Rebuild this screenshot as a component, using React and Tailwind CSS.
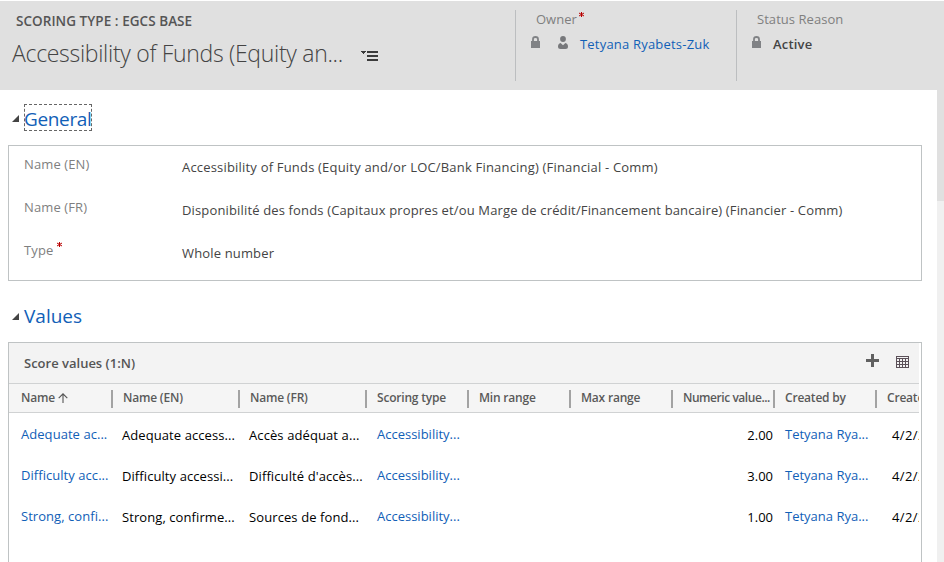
const link = "text-[#1160b7]";

function Lock() {
  return (
    <svg className="block h-[12px] w-[9px]" viewBox="0 0 9 12">
      <path d="M2 6V3.2Q2 1 4.5 1T7 3.2V6" fill="none" stroke="#808285" strokeWidth="1.8" />
      <rect y="5" width="9" height="7" fill="#808285" />
    </svg>
  );
}

function Person() {
  return (
    <svg className="block h-[13px] w-[10px]" viewBox="0 0 10 13">
      <circle cx="5" cy="3" r="2.9" fill="#77787b" />
      <path d="M0 10.5Q0 7.6 2.6 7L5 9.3 7.4 7Q10 7.6 10 10.5 10 13 7.5 13h-5Q0 13 0 10.5Z" fill="#77787b" />
    </svg>
  );
}

function Star({ className }) {
  return (
    <svg className={"block h-[5px] w-[5px] " + className} viewBox="0 0 5 5">
      <path d="M2.5 0V5M0 1L5 4M5 1L0 4" stroke="#b80000" strokeWidth="1" fill="none" />
    </svg>
  );
}

function SectionTitle({ children, focused }) {
  return (
    <div className="flex h-[27px] items-start pl-[12px]">
      <svg className="mt-[11px] block h-[7px] w-[7px]" viewBox="0 0 7 7">
        <path d="M7 0V7H0Z" fill="#444" />
      </svg>
      <div
        className={
          "ml-[5px] h-[27px] whitespace-nowrap text-[19px] " + link + " " +
          (focused ? "w-[68px] leading-[30px] outline-dashed outline-1 -outline-offset-1 outline-[#666] tracking-[-0.35px]" : "leading-[28px]")
        }
      >
        {children}
      </div>
    </div>
  );
}

function Field({ label, value, required, track }) {
  return (
    <div className="flex h-[43px] items-start whitespace-nowrap text-[13px] leading-[18px]">
      <div className="flex w-[158px] pt-[1px] text-[#7f7f7f]">
        <span className="tracking-[0.12px]">{label}</span>
        {required && <Star className="ml-[4px] mt-[1px]" />}
      </div>
      <div className={"pt-[4px] text-[#444] " + track}>{value}</div>
    </div>
  );
}

const columns = [
  ["Name", "w-[104px] pl-[12px]"],
  ["Name (EN)", "w-[127px] pl-[10px]"],
  ["Name (FR)", "w-[127px] pl-[10px]"],
  ["Scoring type", "w-[102px] pl-[10px]"],
  ["Min range", "w-[102px] pl-[10px]"],
  ["Max range", "w-[102px] pl-[10px]"],
  ["Numeric value...", "w-[102px] pl-[10px] tracking-[-0.45px]"],
  ["Created by", "w-[102px] pl-[10px]"],
  ["Created on", "w-[102px] pl-[10px]"],
];

const rows = [
  ["Adequate ac...", "Adequate access...", "Accès adéquat a...", "2.00"],
  ["Difficulty acc...", "Difficulty accessi...", "Difficulté d'accès...", "3.00"],
  ["Strong, confi...", "Strong, confirme...", "Sources de fond...", "1.00"],
];

export default function App() {
  return (
    <div className="flex h-[562px] w-[944px] flex-col overflow-hidden bg-white pt-px font-['Open_Sans','Noto_Sans',sans-serif]">
      <header className="flex h-[89px] shrink-0 bg-[#e0e0e0]">
        <div className="w-[515px] whitespace-nowrap">
          <div className="pl-[16px] pt-[11px] text-[13.5px] font-semibold leading-[18px] tracking-[0.05px] text-[#555]">
            SCORING TYPE : EGCS BASE
          </div>
          <div className="flex pl-[12px]">
            <h1 className="mt-[6px] w-[349px] text-[23px] font-light leading-[34px] tracking-[-0.3px] text-[#444]">
              Accessibility of Funds (Equity an...
            </h1>
            <svg className="mt-[21px] block h-[10px] w-[17px]" viewBox="0 0 17 10">
              <path d="M0 0h5v1H4v1H3v1H2V2H1V1H0ZM6 0h11v2H6ZM6 4h11v2H6ZM6 8h11v2H6Z" fill="#3b3b3b" />
            </svg>
          </div>
        </div>
        <div className="mt-[9px] h-[71px] w-[221px] whitespace-nowrap border-l border-[#bcbec0] pl-[15px] text-[13px]">
          <div className="flex pl-[5px] leading-[18px] text-[#7f7f7f]">
            <span>Owner</span>
            <Star className="ml-[2px] mt-[2px]" />
          </div>
          <div className="mt-[7px] flex leading-[18px]">
            <div className="mt-px w-[27px]"><Lock /></div>
            <div className="mt-px w-[22px]"><Person /></div>
            <span className={"tracking-[0.2px] " + link}>Tetyana Ryabets-Zuk</span>
          </div>
        </div>
        <div className="mt-[9px] h-[71px] whitespace-nowrap border-l border-[#bcbec0] pl-[15px] text-[13px]">
          <div className="pl-[5px] leading-[18px] tracking-[0.05px] text-[#7f7f7f]">Status Reason</div>
          <div className="mt-[7px] flex leading-[18px]">
            <div className="mt-px w-[21px]"><Lock /></div>
            <span className="font-semibold tracking-[0.2px] text-[#444]">Active</span>
          </div>
        </div>
      </header>

      <div className="flex h-[472px] justify-between">
        <main className="w-[922px] pt-[14px]">
          <SectionTitle focused>General</SectionTitle>
          <section className="ml-[8px] mt-[14px] h-[136px] border border-[#bfc3c4] pl-[15px] pt-[8px]">
            <Field label="Name (EN)" value="Accessibility of Funds (Equity and/or LOC/Bank Financing) (Financial - Comm)" track="tracking-[0.19px]" />
            <Field label="Name (FR)" value="Disponibilité des fonds (Capitaux propres et/ou Marge de crédit/Financement bancaire) (Financier - Comm)" track="tracking-[0.15px]" />
            <Field label="Type" value="Whole number" required track="tracking-[0.15px]" />
          </section>
          <div className="mt-[21px]">
            <SectionTitle>Values</SectionTitle>
          </div>
          <section className="ml-[8px] mt-[13px] h-[230px] border border-[#bfc3c4] pr-[2px]">
            <div className="flex h-[41px] items-start border-b border-[#d0d2d3] bg-[#f3f3f3] pl-[15px]">
              <span className="mt-[11px] w-[842px] text-[13px] font-semibold leading-[18px] text-[#555]">Score values (1:N)</span>
              <svg className="mt-[11px] block h-[13px] w-[13px]" viewBox="0 0 13 13">
                <path d="M5 0h3v5h5v3H8v5H5V8H0V5h5Z" fill="#606060" />
              </svg>
              <svg className="ml-[17px] mt-[13px] block h-[12px] w-[13px]" viewBox="0 0 13 12">
                <path d="M0 0H13V12H0ZM1 1V2H12V1ZM1 3V5H3V3ZM4 3V5H6V3ZM7 3V5H9V3ZM10 3V5H12V3ZM1 6V8H3V6ZM4 6V8H6V6ZM7 6V8H9V6ZM10 6V8H12V6ZM1 9V11H3V9ZM4 9V11H6V9ZM7 9V11H9V9ZM10 9V11H12V9Z" fill="#5b5058" fillRule="evenodd" />
              </svg>
            </div>
            <div className="flex h-[29px] overflow-hidden border-b border-[#d0d2d3] bg-[#f5f5f5] text-[12px] font-semibold leading-[16px] tracking-[-0.2px] text-[#5a5a5a]">
              {columns.map(([name, cls], i) => (
                <div key={name} className={"flex shrink-0 whitespace-nowrap pt-[6px] " + cls}>
                  <span className="grow">{name}{i === 0 && (
                    <svg className="ml-[3px] inline-block h-[10px] w-[10px] align-[-1px]" viewBox="0 0 10 10">
                      <path d="M5 10V1M0.7 5.2L5 0.8L9.3 5.2" fill="none" stroke="#555" strokeWidth="1.1" />
                    </svg>
                  )}</span>
                  <i className="h-[18px] w-[2px] bg-[#a3a3a3]" />
                </div>
              ))}
            </div>
            {rows.map(([name, en, fr, num]) => (
              <div key={name} className="flex h-[41px] overflow-hidden whitespace-nowrap pt-[12px] text-[13px] leading-[18px] text-black">
                <div className={"w-[113px] shrink-0 pl-[12px] tracking-[0.05px] " + link}>{name}</div>
                <div className="w-[127px] shrink-0 pt-px tracking-[0.08px]">{en}</div>
                <div className="w-[128px] shrink-0 pt-px tracking-[0.1px]">{fr}</div>
                <div className={"w-[306px] shrink-0 " + link}>{"Accessibility..."}</div>
                <div className="w-[90px] shrink-0 pt-px text-right">{num}</div>
                <div className={"w-[119px] shrink-0 pl-[12px] " + link}>{"Tetyana Rya..."}</div>
                <div className="shrink-0 pt-px tracking-[0.4px]">4/2/2019</div>
              </div>
            ))}
          </section>
        </main>
        <div className="w-[7px] bg-[#f0f0f0]">
          <div className="h-[111px] bg-[#e0e0e0]" />
        </div>
      </div>
    </div>
  );
}
